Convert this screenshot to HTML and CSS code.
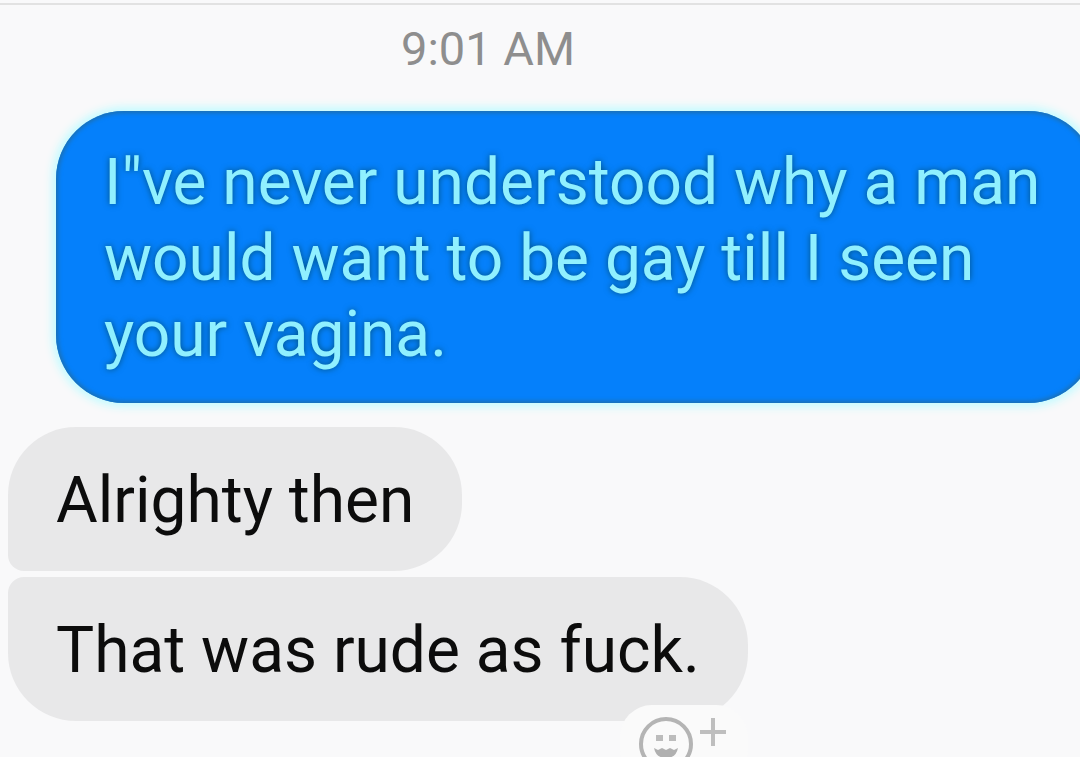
FILE: index.html
```html
<!DOCTYPE html>
<html lang="en">
<head>
<meta charset="utf-8">
<meta name="viewport" content="width=device-width, initial-scale=1">
<title>Conversation</title>
<link rel="stylesheet" href="styles.css">
</head>
<body>
<main class="chat">
  <time class="stamp" datetime="09:01">9:01 AM</time>
  <p class="bubble sent">I"ve never understood why a man would want to be gay till I seen your vagina.</p>
  <div class="group">
    <p class="bubble received first">Alrighty then</p>
    <div class="bubble received last">
      <p class="text">That was rude as fuck.</p>
      <button class="react" type="button" aria-label="Add reaction">
        <svg class="icon" viewBox="0 0 96 60" fill="none" stroke="#b4b4b4" aria-hidden="true">
          <circle cx="30" cy="31" r="25" stroke-width="4"/>
          <path d="M20 25h7M33 25h7" stroke="#bcbcbc" stroke-width="6"/>
          <path d="M18 35l4 2 4-2 4 2 4-2 4 2 4-2q-2 10-12 10t-12-10z" fill="#b0b0b0" stroke="none"/>
          <path d="M64 19h26M77 5v28" stroke="#bebebe" stroke-width="4"/>
        </svg>
      </button>
    </div>
  </div>
</main>
</body>
</html>
```
FILE: styles.css
```css
* {
  box-sizing: border-box;
}

body {
  margin: 0;
  padding-top: 3px;
  background: #f9f9fa;
  font-family: Roboto, "Liberation Sans", sans-serif;
}

.chat {
  display: flex;
  flex-direction: column;
  height: calc(100vh - 3px);
  border-top: 2px solid #e2e2e2;
  overflow: hidden;
}

.stamp {
  align-self: center;
  margin: 14px 104px 32px 0;
  color: #8e8e8e;
  font-size: 47px;
  line-height: 60px;
}

.bubble {
  margin: 0;
  font-size: 64px;
  line-height: 76px;
}

.sent {
  flex: none;
  margin: 0 -16px 0 56px;
  padding: 34px 40px 30px 48px;
  border-radius: 68px;
  background: #0580fb;
  box-shadow: inset 0 0 4px 2px #1e6fae, 0 0 8px 4px #c4fbff;
  color: #90f0ff;
  text-shadow: 0 0 6px #00507c;
}

.group {
  display: flex;
  flex-direction: column;
  align-items: flex-start;
  gap: 6px;
  margin: 24px 0 0 8px;
}

.received {
  padding: 36px 48px 32px;
  background: #e8e8e9;
  color: #0c0c0c;
}

.first {
  border-radius: 68px 68px 68px 16px;
}

.last {
  position: relative;
  border-radius: 16px 68px 68px 68px;
}

.text {
  margin: 0;
}

.react {
  position: absolute;
  right: 0;
  bottom: -60px;
  padding: 8px 16px;
  border: 0;
  border-radius: 32px;
  background: #fafafa;
}

.icon {
  display: block;
  width: 96px;
  height: 60px;
}
```
